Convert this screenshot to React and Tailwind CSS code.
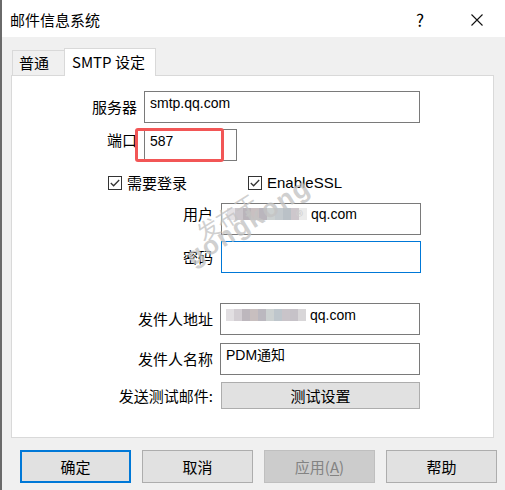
import { useState } from 'react'

const ui = 'font-["Noto_Sans_CJK_SC","Noto_Sans",sans-serif]'
const mono = 'font-["Liberation_Sans","Noto_Sans_CJK_SC",sans-serif]'

const userBlur = ['bg-[#e4e1e4]', 'bg-[#cbc6cb]', 'bg-[#bab4ba]', 'bg-[#c9c0c1]', 'bg-[#bab6bd]', 'bg-[#ccd1d1]', 'bg-[#c4cace]', 'bg-[#bac1c7]', 'bg-[#cdc7cc]', 'bg-[#ebebeb]']
const fromBlur = ['bg-[#e2dfe2]', 'bg-[#d3ced3]', 'bg-[#bdb7bd]', 'bg-[#c8bfbf]', 'bg-[#bbb8bf]', 'bg-[#ccd1d1]', 'bg-[#bec6cc]', 'bg-[#c9c4c9]', 'bg-[#c6c2c8]', 'bg-[#d8d6d8]']

function Blur({ blocks }) {
  return (
    <span className="mr-[4px] inline-flex h-[12px] align-[-1px]">
      {blocks.map((cls, i) => (
        <span key={i} className={`h-full w-[8px] ${cls}`} />
      ))}
    </span>
  )
}

function Field({ width, focused, pad = 'pt-[2px]', children }) {
  return (
    <div
      className={`h-[32px] ${width} border bg-white pl-[5px] ${pad} text-[14px] leading-[18px] text-black ${mono} ${
        focused ? 'border-[#0078d7]' : 'border-[#7a7a7a]'
      }`}
    >
      {children}
    </div>
  )
}

function Check({ checked, onToggle, label }) {
  return (
    <button type="button" onClick={onToggle} className="flex h-[15px] items-center gap-[5px]">
      <span className="flex h-[14px] w-[14px] items-center justify-center border border-[#333333] bg-white">
        {checked && (
          <svg width="10" height="8" viewBox="0 0 10 8" fill="none">
            <path d="M0.8 4 L3.6 6.8 L9.2 1" stroke="#333333" strokeWidth="1.3" />
          </svg>
        )}
      </span>
      <span className="text-[15px] leading-[20px] text-black">{label}</span>
    </button>
  )
}

function DlgButton({ children, primary, disabled }) {
  let look = 'border border-[#adadad] bg-[#e1e1e1] text-black'
  if (primary) look = 'border-2 border-[#0078d7] bg-[#e1e1e1] text-black'
  if (disabled) look = 'border border-[#bfbfbf] bg-[#cccccc] text-[#838383]'
  return (
    <button type="button" disabled={disabled} className={`h-[33px] w-[111px] text-[15px] leading-[20px] ${look}`}>
      {children}
    </button>
  )
}

export default function App() {
  const [needLogin, setNeedLogin] = useState(true)
  const [ssl, setSsl] = useState(true)

  return (
    <div className={`relative h-[490px] w-[505px] overflow-hidden border-l-2 border-[#6a6a6a] bg-[#f0f0f0] ${ui}`}>
      {/* title bar */}
      <div className="flex h-[37px] items-center bg-white pt-[3px] pl-[8px]">
        <span className="text-[15px] leading-[20px] text-black">邮件信息系统</span>
        <span className="ml-auto mr-[47px] text-[17px] leading-[20px] text-black">?</span>
        <svg className="mr-[22px]" width="12" height="12" viewBox="0 0 12 12" fill="none">
          <path d="M0.5 0.5 L11.5 11.5 M11.5 0.5 L0.5 11.5" stroke="#111111" strokeWidth="1.1" />
        </svg>
      </div>

      {/* tabs */}
      <div className="flex h-[38px] items-end pl-[10px]">
        <div className="flex h-[25px] w-[52px] items-center border-t border-l border-[#d9d9d9] pl-[6px] text-[15px] leading-[20px] text-black">
          普通
        </div>
        <div className="relative z-10 -mb-px flex h-[28px] w-[92px] items-center border-x border-t border-[#d9d9d9] bg-white pb-px pl-[7px] text-[15px] leading-[20px] text-black">
          SMTP 设定
        </div>
      </div>

      {/* panel */}
      <div className="relative ml-[9px] h-[363px] w-[483px] border border-[#d9d9d9] bg-white">
        <div className="mt-[15px] flex items-center">
          <span className="w-[125px] text-right text-[15px] leading-[20px] text-black">服务器</span>
          <div className="ml-[7px]">
            <Field width="w-[276px]">smtp.qq.com</Field>
          </div>
        </div>

        <div className="mt-[6px] flex">
          <span className="mt-[1px] w-[125px] text-right text-[15px] leading-[20px] text-black">端口</span>
          <div className="relative ml-[7px]">
            <Field width="w-[93px]">587</Field>
            <div className="absolute -top-px left-[-9px] h-[34px] w-[89px] rounded-[3px] border-[3px] border-[#f25656]" />
          </div>
        </div>

        <div className="mt-[14px] flex pl-[96px]">
          <div className="w-[140px]">
            <Check checked={needLogin} onToggle={() => setNeedLogin(!needLogin)} label="需要登录" />
          </div>
          <Check checked={ssl} onToggle={() => setSsl(!ssl)} label={<span className={mono}>EnableSSL</span>} />
        </div>

        <div className="mt-[13px] flex">
          <span className="mt-[1px] w-[201px] text-right text-[15px] leading-[20px] text-black">用户</span>
          <div className="ml-[8px]">
            <Field width="w-[200px]" pad="pt-[1px]">
              <Blur blocks={userBlur} />
              qq.com
            </Field>
          </div>
        </div>

        <div className="mt-[6px] flex items-center">
          <span className="w-[201px] text-right text-[15px] leading-[20px] text-black">密码</span>
          <div className="ml-[8px]">
            <Field width="w-[200px]" focused />
          </div>
        </div>

        <div className="mt-[30px] flex items-center">
          <span className="w-[201px] text-right text-[15px] leading-[20px] text-black">发件人地址</span>
          <div className="ml-[7px]">
            <Field width="w-[200px]">
              <Blur blocks={fromBlur} />
              qq.com
            </Field>
          </div>
        </div>

        <div className="mt-[8px] flex items-center">
          <span className="w-[201px] text-right text-[15px] leading-[20px] text-black">发件人名称</span>
          <div className="ml-[7px]">
            <Field width="w-[200px]">PDM通知</Field>
          </div>
        </div>

        <div className="mt-[7px] flex items-center">
          <span className="w-[201px] text-right text-[15px] leading-[20px] text-black">发送测试邮件:</span>
          <button
            type="button"
            className="ml-[8px] h-[27px] w-[199px] border border-[#adadad] bg-[#e1e1e1] text-[15px] leading-[20px] text-black"
          >
            测试设置
          </button>
        </div>

        {/* watermark */}
        <div className="pointer-events-none absolute left-[192px] top-[145px] origin-bottom-left -rotate-[32deg] whitespace-nowrap text-[22px] leading-[22px] text-[#c4c4c4]/80">
          发布于
        </div>
        <div className={`pointer-events-none absolute left-[183px] top-[168px] origin-bottom-left -rotate-[32deg] whitespace-nowrap text-[26px] font-bold leading-[26px] tracking-[2px] text-[#c4c4c4]/80 ${mono}`}>
          gongkong
        </div>
        <span className="pointer-events-none absolute left-[284px] top-[129px] text-[15px] text-[#d0d0d0]">®</span>
      </div>

      {/* buttons */}
      <div className="mt-[12px] flex gap-[11px] pl-[18px]">
        <DlgButton primary>确定</DlgButton>
        <DlgButton>取消</DlgButton>
        <DlgButton disabled>
          应用(<span className="underline underline-offset-2">A</span>)
        </DlgButton>
        <DlgButton>帮助</DlgButton>
      </div>
    </div>
  )
}
